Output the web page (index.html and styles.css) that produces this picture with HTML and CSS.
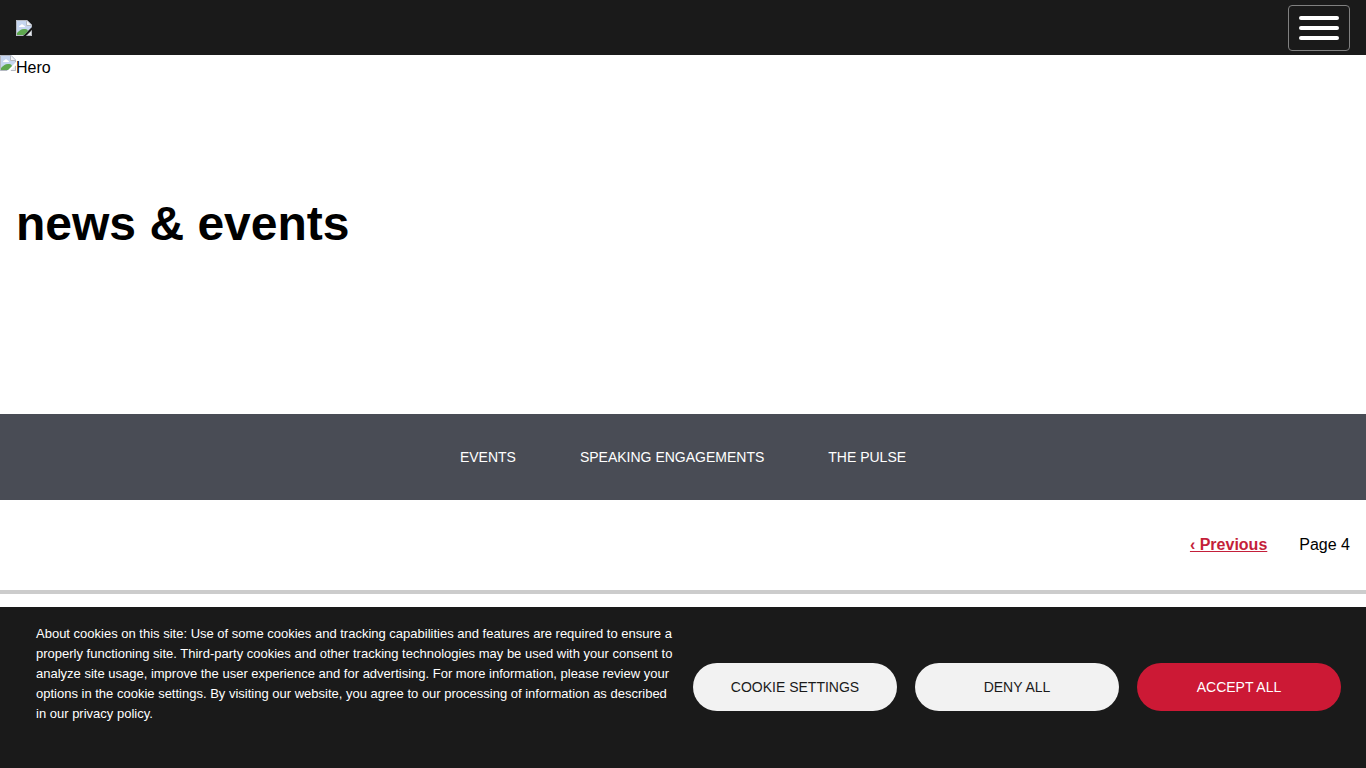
FILE: index.html
```html
<!DOCTYPE html>
<html lang="en">
	<head>
		<meta charset="UTF-8" />
		<meta name="viewport" content="width=device-width, initial-scale=1.0" />
		<title>News &amp; Events</title>
		<link rel="stylesheet" href="styles.css">
	</head>

	<body>
		<!-- shared placeholder picture, used by the logo and the hero -->
		<svg class="defs" width="0" height="0" aria-hidden="true">
			<symbol id="placeholder" viewBox="0 0 16 16">
				<path fill="#c6d6f0" d="M0 0h11l5 5v2L7 16H0z"/>
				<path fill="#fff" d="M3 7c0-1 1-2 2-2 0-1 2-1 2 0 1 0 2 1 2 2z"/>
				<path fill="#5fa84f" d="M1 15v-2c2-2 4-4 7-4 2 0 3 0 4 2l-4 4z"/>
				<path fill="none" stroke="#b4b8c0" d="M15.500 7V5L11 .5H.5v15H7"/>
				<path fill="#f5f6f8" stroke="#b4b8c0" d="M10.500 .5v5h5"/>
				<path fill="#e8ebee" d="M16 10v6h-6z"/>
				<path fill="none" stroke="#b4b8c0" d="M15.500 11v4.500H11"/>
			</symbol>
		</svg>

		<header class="topbar">
			<a class="logo" href="#" aria-label="Home">
				<svg width="16" height="16"><use href="#placeholder"/></svg>
			</a>
			<button class="menu-toggle" type="button" aria-label="Menu">
				<span></span>
				<span></span>
				<span></span>
			</button>
		</header>

		<main>
			<section class="hero">
				<div class="hero-image">
					<svg width="16" height="16" aria-hidden="true"><use href="#placeholder"/></svg>
					<span>Hero</span>
				</div>
				<h1>news &amp; events</h1>
			</section>

			<nav class="subnav">
				<a href="#">EVENTS</a>
				<a href="#">SPEAKING ENGAGEMENTS</a>
				<a href="#">THE PULSE</a>
			</nav>

			<nav class="pager" aria-label="Pagination">
				<a href="#">‹ Previous</a>
				<span>Page 4</span>
			</nav>
		</main>

		<section class="cookies" aria-label="Cookies">
			<p>About cookies on this site: Use of some cookies and tracking capabilities and features are required to ensure a properly functioning site. Third-party cookies and other tracking technologies may be used with your consent to analyze site usage, improve the user experience and for advertising. For more information, please review your options in the cookie settings. By visiting our website, you agree to our processing of information as described in our privacy policy.</p>
			<div class="cookie-buttons">
				<button class="button" type="button">COOKIE SETTINGS</button>
				<button class="button" type="button">DENY ALL</button>
				<button class="button accept" type="button">ACCEPT ALL</button>
			</div>
		</section>
	</body>
</html>
```
FILE: styles.css
```css
* { box-sizing:border-box }

body {
	margin:0;
	background:#fff; color:#000;
	font-family:"Liberation Sans", Arial, sans-serif;
	font-size:16px;
	line-height:24px;
}

.defs { position:absolute }

/* header */
.topbar {
	display:flex;
	align-items:center;
	justify-content:space-between;
	padding:5px 16px 4px;
	background:#1a1a1a;
}

.logo svg { display:block }

.menu-toggle {
	display:flex;
	flex-direction:column;
	justify-content:center;
	gap:6px;
	width:62px; height:46px;
	padding:0 10px;
	background:none;
	border:1px solid #808080;
	border-radius:4px;
	cursor:pointer;
}

.menu-toggle span {
	height:4px;
	background:#fff;
	border-radius:2px;
}

/* hero */
.hero {
	display:grid;
	min-height:359px;
}

.hero-image, .hero h1 { grid-area:1 / 1 }

.hero-image { display:flex; line-height:26px }

.hero h1 {
	align-self:center;
	margin:0;
	padding:0 16px 22px;
	font-size:48px;
	line-height:58px;
}

/* section links */
.subnav {
	display:flex;
	flex-wrap:wrap;
	justify-content:center;
	gap:0 64px;
	padding:31px 16px;
	background:#494c55;
}

.subnav a {
	color:#fff;
	font-size:14px;
	text-decoration:none;
}

.pager {
	display:flex;
	justify-content:flex-end;
	gap:32px;
	padding:33px 16px;
	border-bottom:4px solid #ccc;
}

.pager a {
	color:#c41f3a;
	font-weight:bold;
}

/* cookie banner, always on top of the page */
.cookies {
	position:fixed;
	left:0; right:0; bottom:0;
	display:flex;
	align-items:center;
	gap:18px;
	padding:0 25px 1px 36px;
	background:#1a1a1a; color:#fff;
}

.cookies p {
	flex:1;
	margin:0;
	padding:17px 0 43px;
	font-size:13px;
	line-height:20px;
}

.cookie-buttons {
	display:grid;
	grid-template-columns:repeat(3, 204px);
	gap:18px;
}

.button {
	height:48px;
	background:#f2f2f2; color:#1a1a1a;
	border:0;
	border-radius:24px;
	font-family:inherit;
	font-size:14px;
	cursor:pointer;
}

.accept { background:#cc1935; color:#fff }

@media (max-width:1000px) {
	.cookies { flex-direction:column; padding-bottom:20px }
	.cookies p { padding-bottom:0 }
	.cookie-buttons { grid-template-columns:repeat(3, 1fr); width:100% }
}
```
